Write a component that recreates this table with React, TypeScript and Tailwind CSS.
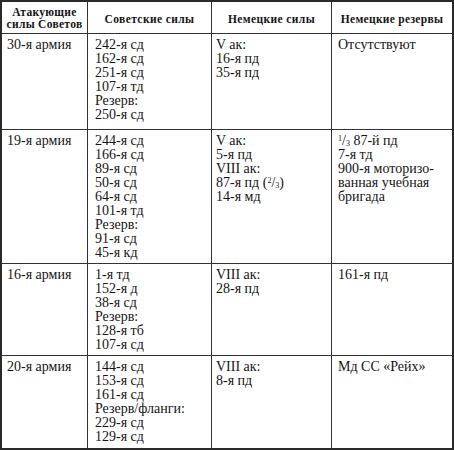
import React from "react";

const Lines = ({ items }: { items: React.ReactNode[] }) => (
  <div className="flex flex-col">
    {items.map((t, i) => (
      <div key={i} className="h-[14px] leading-[14px] whitespace-nowrap">
        {t}
      </div>
    ))}
  </div>
);

const Frac = ({ n, d }: { n: string; d: string }) => (
  <span>
    <span className="text-[8px] leading-none relative top-[-4px]">{n}</span>
    <span>/</span>
    <span className="text-[8px] leading-none relative top-[1px]">{d}</span>
  </span>
);

const rows: { army: string; sov: React.ReactNode[]; ger: React.ReactNode[]; res: React.ReactNode[] }[] = [
  {
    army: "30-я армия",
    sov: ["242-я сд", "162-я сд", "251-я сд", "107-я тд", "Резерв:", "250-я сд"],
    ger: ["V ак:", "16-я пд", "35-я пд"],
    res: ["Отсутствуют"],
  },
  {
    army: "19-я армия",
    sov: ["244-я сд", "166-я сд", "89-я сд", "50-я сд", "64-я сд", "101-я тд", "Резерв:", "91-я сд", "45-я кд"],
    ger: [
      "V ак:",
      "5-я пд",
      "VIII ак:",
      <span key="f">
        87-я пд (<Frac n="2" d="3" />)
      </span>,
      "14-я мд",
    ],
    res: [
      <span key="f">
        <Frac n="1" d="3" /> 87-й пд
      </span>,
      "7-я тд",
      "900-я моторизо-",
      "ванная учебная",
      "бригада",
    ],
  },
  {
    army: "16-я армия",
    sov: ["1-я тд", "152-я д", "38-я сд", "Резерв:", "128-я тб", "107-я сд"],
    ger: ["VIII ак:", "28-я пд"],
    res: ["161-я пд"],
  },
  {
    army: "20-я армия",
    sov: ["144-я сд", "153-я сд", "161-я сд", "Резерв/фланги:", "229-я сд", "129-я сд"],
    ger: ["VIII ак:", "8-я пд"],
    res: ["Мд СС «Рейх»"],
  },
];

export default function App() {
  return (
    <div
      className="w-[454px] h-[450px] bg-white text-[#151515]"
      style={{ fontFamily: '"Liberation Serif", "Times New Roman", serif' }}
    >
      <div className="w-[454px] h-[450px] border-2 border-[#2a2a2a] bg-[#333333] grid grid-cols-[85px_123px_119px_120px] grid-rows-[31px_95px_133px_91px_92px] gap-[1px] text-[14px]">
        <div className="bg-white flex flex-col items-center justify-center font-bold text-[11.5px] leading-[12px] tracking-[0.3px] pt-[1px]">
          <div>Атакующие</div>
          <div>силы Советов</div>
        </div>
        <div className="bg-white flex items-center justify-center font-bold text-[11.5px] tracking-[0.4px] pt-[5px]">
          Советские силы
        </div>
        <div className="bg-white flex items-center justify-center font-bold text-[11.5px] tracking-[0.4px] pt-[5px]">
          Немецкие силы
        </div>
        <div className="bg-white flex items-center justify-center font-bold text-[11.5px] tracking-[0.3px] pt-[5px]">
          Немецкие резервы
        </div>
        {rows.map((r, i) => (
          <React.Fragment key={i}>
            <div className="bg-white pl-[5px] pt-[4px]">
              <Lines items={[r.army]} />
            </div>
            <div className="bg-white pl-[7px] pt-[4px]">
              <Lines items={r.sov} />
            </div>
            <div className="bg-white pl-[4px] pt-[4px]">
              <Lines items={r.ger} />
            </div>
            <div className="bg-white pl-[6px] pt-[4px]">
              <Lines items={r.res} />
            </div>
          </React.Fragment>
        ))}
      </div>
    </div>
  );
}
